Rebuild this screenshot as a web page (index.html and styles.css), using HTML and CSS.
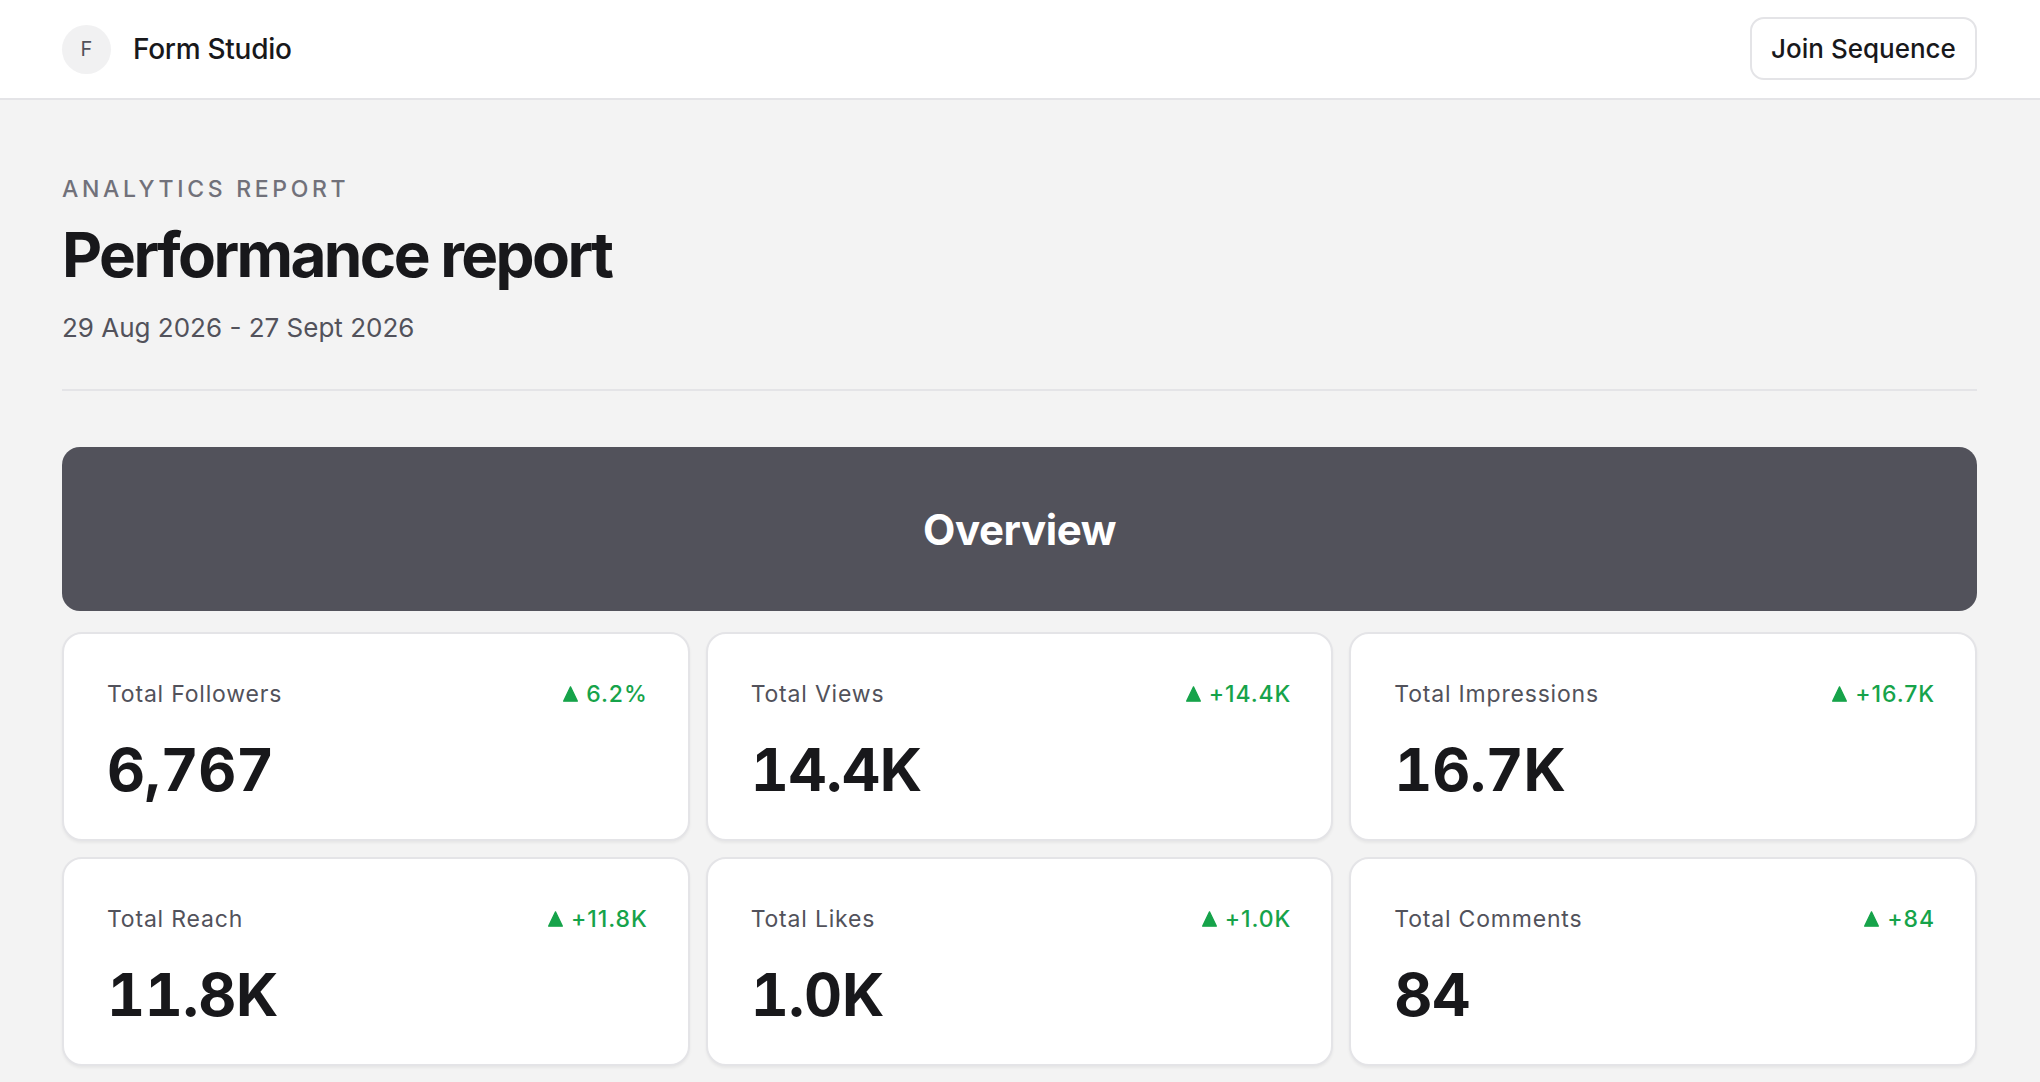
FILE: index.html
```html
<!DOCTYPE html>
<html lang="en">
<head>
<meta charset="utf-8">
<title>Performance report</title>
<link rel="stylesheet" href="styles.css">
</head>
<body>
<header class="topbar">
  <div class="brand">
    <span class="brand-mark">F</span>
    <span class="brand-name">Form Studio</span>
  </div>
  <button class="join-btn">Join Sequence</button>
</header>
<main class="page">
  <p class="eyebrow">ANALYTICS REPORT</p>
  <h1 class="title">Performance report</h1>
  <p class="daterange">29 Aug 2026 - 27 Sept 2026</p>
  <hr class="divider">
  <section class="banner"><h2>Overview</h2></section>
  <section class="stats">
    <div class="card">
      <div class="card-head"><span class="card-label">Total Followers</span><span class="delta"><svg class="tri" viewBox="0 0 14 15"><path d="M7 0.8 L13.4 14.2 L0.6 14.2 Z" fill="#16a34a" stroke="#16a34a" stroke-width="1.2" stroke-linejoin="round"/></svg>6.2%</span></div>
      <div class="card-value">6,767</div>
    </div>
    <div class="card">
      <div class="card-head"><span class="card-label">Total Views</span><span class="delta"><svg class="tri" viewBox="0 0 14 15"><path d="M7 0.8 L13.4 14.2 L0.6 14.2 Z" fill="#16a34a" stroke="#16a34a" stroke-width="1.2" stroke-linejoin="round"/></svg>+14.4K</span></div>
      <div class="card-value">14.4K</div>
    </div>
    <div class="card">
      <div class="card-head"><span class="card-label">Total Impressions</span><span class="delta"><svg class="tri" viewBox="0 0 14 15"><path d="M7 0.8 L13.4 14.2 L0.6 14.2 Z" fill="#16a34a" stroke="#16a34a" stroke-width="1.2" stroke-linejoin="round"/></svg>+16.7K</span></div>
      <div class="card-value">16.7K</div>
    </div>
    <div class="card">
      <div class="card-head"><span class="card-label">Total Reach</span><span class="delta"><svg class="tri" viewBox="0 0 14 15"><path d="M7 0.8 L13.4 14.2 L0.6 14.2 Z" fill="#16a34a" stroke="#16a34a" stroke-width="1.2" stroke-linejoin="round"/></svg>+11.8K</span></div>
      <div class="card-value">11.8K</div>
    </div>
    <div class="card">
      <div class="card-head"><span class="card-label">Total Likes</span><span class="delta"><svg class="tri" viewBox="0 0 14 15"><path d="M7 0.8 L13.4 14.2 L0.6 14.2 Z" fill="#16a34a" stroke="#16a34a" stroke-width="1.2" stroke-linejoin="round"/></svg>+1.0K</span></div>
      <div class="card-value">1.0K</div>
    </div>
    <div class="card">
      <div class="card-head"><span class="card-label">Total Comments</span><span class="delta"><svg class="tri" viewBox="0 0 14 15"><path d="M7 0.8 L13.4 14.2 L0.6 14.2 Z" fill="#16a34a" stroke="#16a34a" stroke-width="1.2" stroke-linejoin="round"/></svg>+84</span></div>
      <div class="card-value">84</div>
    </div>
  </section>
</main>
</body>
</html>
```
FILE: styles.css
```css
* { box-sizing: border-box; }
html, body { margin: 0; padding: 0; }
body {
  background: #f3f3f3;
  font-family: Inter, "Noto Sans", "Liberation Sans", sans-serif;
  color: #18181b;
}
.topbar {
  height: 100px;
  background: #ffffff;
  border-bottom: 2px solid #e4e4e7;
  display: flex;
  align-items: center;
  justify-content: space-between;
  padding: 0 63px 0 62px;
}
.brand { display: flex; align-items: center; gap: 22px; }
.brand-mark {
  width: 49px; height: 49px;
  border-radius: 50%;
  background: #f1f1f2;
  color: #52525b;
  font-size: 20px;
  display: flex; align-items: center; justify-content: center;
}
.brand-name { font-size: 28px; font-weight: 500; color: #18181b; letter-spacing: -0.01em; }
.join-btn {
  height: 63px;
  width: 227px;
  padding: 0;
  background: #ffffff;
  border: 2px solid #e4e4e7;
  border-radius: 14px;
  font-family: inherit;
  font-size: 26px;
  font-weight: 500;
  color: #18181b;
  margin-top: -2px;
}
.page { padding: 0 63px 40px 62px; }
.eyebrow {
  margin: 74px 0 0;
  font-size: 23px;
  line-height: 30px;
  letter-spacing: 0.16em;
  color: #71717a;
  font-weight: 500;
}
.title {
  margin: 17px 0 0;
  font-size: 62px;
  line-height: 68px;
  font-weight: 700;
  letter-spacing: -0.042em;
  color: #18181b;
}
.daterange {
  margin: 21px 0 0;
  font-size: 26px;
  line-height: 36px;
  color: #52525b;
}
.divider {
  margin: 43px 0 0;
  border: 0;
  border-top: 2px solid #e4e4e7;
}
.banner {
  margin-top: 56px;
  height: 164px;
  background: #52525b;
  border-radius: 18px;
  display: flex; align-items: center; justify-content: center;
}
.banner h2 {
  margin: 0;
  color: #ffffff;
  font-size: 42px;
  font-weight: 700;
  letter-spacing: -0.01em;
}
.stats {
  margin-top: 21px;
  display: grid;
  grid-template-columns: repeat(3, 1fr);
  gap: 16px;
}
.card {
  background: #ffffff;
  border: 2px solid #e4e4e7;
  border-radius: 20px;
  padding: 45px 40px 40px 43px;
  box-shadow: 0 2px 3px rgba(0,0,0,0.05);
}
.card-head { display: flex; justify-content: space-between; align-items: center; }
.card-label { font-size: 23px; line-height: 30px; color: #52525b; letter-spacing: 0.035em; }
.delta {
  display: flex; align-items: center; gap: 8px;
  font-size: 23px; line-height: 30px; font-weight: 500;
  color: #16a34a; letter-spacing: 0.04em;
}
.tri { width: 15px; height: 16px; }
.card-value {
  margin-top: 32px;
  font-size: 59px;
  line-height: 58px;
  font-weight: 700;
  color: #18181b;
  letter-spacing: -0.005em;
  font-feature-settings: "tnum" 1;
}
```
